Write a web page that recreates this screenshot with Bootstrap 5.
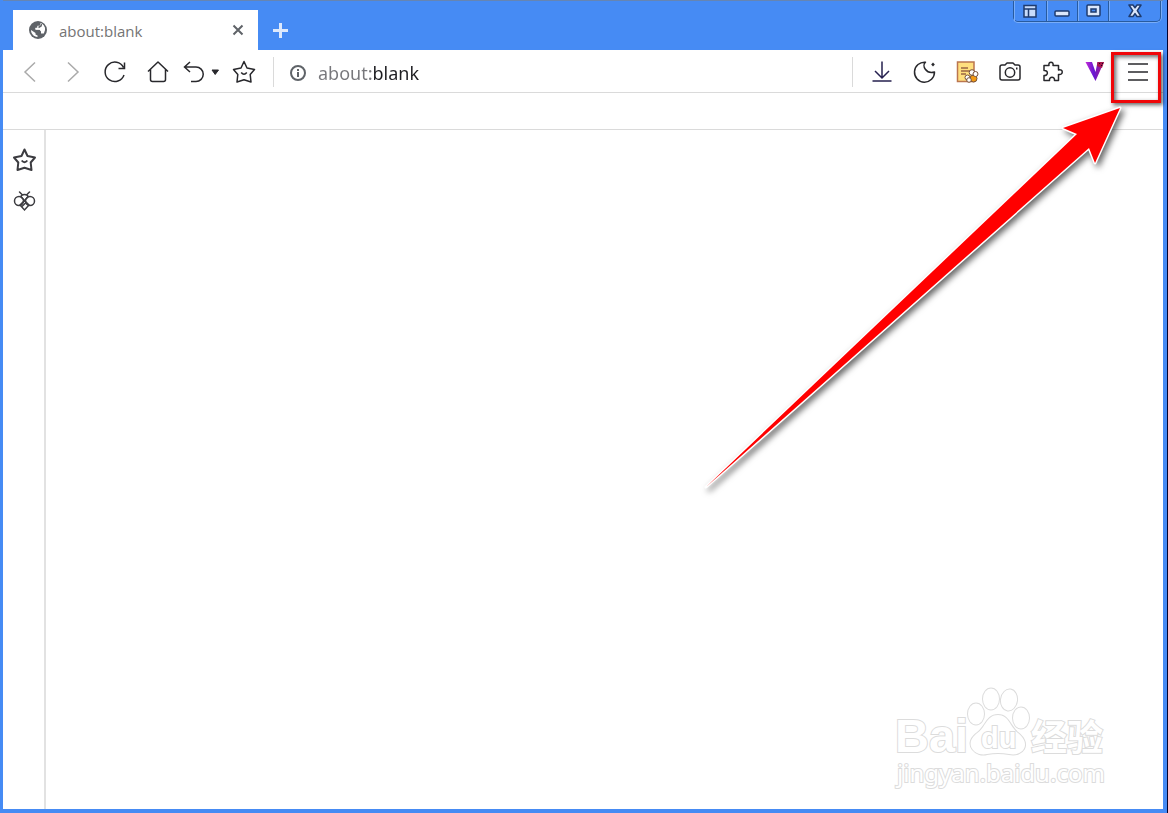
<!DOCTYPE html>
<html lang="zh-CN">
<head>
<meta charset="utf-8">
<meta name="viewport" content="width=device-width, initial-scale=1">
<title>about:blank</title>
<link rel="stylesheet" href="https://cdn.jsdelivr.net/npm/bootstrap@5.3.0/dist/css/bootstrap.min.css">
<style>
:root{--frame:#468bf4;--line:#dadada;--ink:#28282c}
body{font-family:"Noto Sans","Open Sans",sans-serif;background:#03022e;color:var(--ink)}
.window{border:solid var(--frame);border-width:0 4px 4px 3px;margin-right:1px;background:#fff}
svg{display:block;fill:none;stroke:currentColor;stroke-width:1.5;overflow:visible}
.glyph-flat{stroke:none}
.glyph-muted{stroke:#aaa}
.glyph-grey{stroke:#5f6368;stroke-width:2}
.glyph-plus{stroke:#dde9fc;stroke-width:3}
.glyph-violet{stroke:#26204f}
.btn{--bs-btn-padding-x:0;--bs-btn-padding-y:0;border:0;border-radius:0;color:inherit;display:flex;align-items:center;justify-content:center}
.titlebar{background:var(--frame);height:50px;border-top:1px solid #6685b2}
.tab{background:#fff;width:245px;height:40px;margin-left:10px;padding:0 13px 0 16px}
.tab-title{font-family:"Open Sans","Noto Sans",sans-serif;font-size:15px;padding-top:2px;color:#747474}
.controls{height:21px;border:1px solid #285b9f;border-top:0;border-radius:0 0 5px 5px;box-shadow:0 1px #79adf9,1px 0 #79adf9;margin-right:2px;color:#1f3b6e}
.controls .btn{width:31px;border-left:1px solid #285b9f;box-shadow:inset 1px 0 #79adf9}
.controls .btn:first-child{border-left:0;width:32px}
.controls .btn:last-child{width:52px}
.toolbar{height:43px;padding-top:2px;border-bottom:1px solid var(--line)}
.toolbar .btn{height:40px}
.nav-keys .btn{width:43px}
.rule{width:1px;height:30px;background:var(--line)}
.site-info{margin:2px 12px 0 16px}
.address{font-size:18px;border:0;outline:0;padding:2px 0 0;color:transparent;background:linear-gradient(90deg,#77777b 53px,#1e1e22 53px);-webkit-background-clip:text;background-clip:text}
.tools{width:298px;margin-right:4px}
.bookmarks{height:37px;border-bottom:1px solid var(--line)}
.side{width:43px;border-right:2px solid #e2e2e2;padding-top:9px;color:#3c3c40}
.side .btn{height:41px}
.hint-box{top:2px;right:2px;width:50px;height:51px;border:3px solid #f00608;box-shadow:2px 2px 4px #0009,inset 2px 2px 4px #0009;pointer-events:none}
.hint-arrow{top:50px;right:33px;pointer-events:none;filter:drop-shadow(3px 3px 3px #0009)}
.watermark{right:47px;bottom:9px;pointer-events:none;stroke:#dcdcdc;stroke-width:2;paint-order:stroke;font-weight:700}
.watermark .site-line{font-weight:400}
</style>
</head>
<body>
<div class="window d-flex flex-column min-vh-100">
  <header class="titlebar d-flex align-items-end flex-shrink-0">
    <div class="tab d-flex align-items-center">
      <svg class="glyph-flat" width="18" height="18" viewBox="0 0 18 18"><circle cx="9" cy="9" r="9" fill="#5f6368"/><path d="M11.500 2.300L10.800 4.800H8.500V6.800H6.500V8.500H10.500L12 10.500V12.500H14.800C16.800 9 16.200 4.300 11.500 2.300ZM2 9L6.500 12V13.500L8.500 14.500V16C4.800 15.800 2 12.800 2 9Z" fill="#fff"/><path d="M11.800 2.300L11.200 4.300Q11 5.300 10 5.300H8.500V7H6.500V8.800H10.500Q11.500 8.800 11.800 10L14.500 9.500L15.900 9.500L16 7.500C15.500 5 14 3.100 11.800 2.300Z" fill="#fff"/><path d="M12.500 3L12 5L9.500 6.500" stroke="#5f6368" fill="none"/></svg>
      <span class="tab-title flex-grow-1 ms-2 ps-1">about:blank</span>
      <button class="btn" type="button" aria-label="Close tab"><svg class="glyph-grey" width="14" height="14" viewBox="0 0 14 14"><path d="M2.500 2.500L11.500 11.500M11.500 2.500L2.500 11.500"/></svg></button>
    </div>
    <button class="btn ms-3" type="button" aria-label="New tab"><svg class="glyph-plus" width="14" height="40" viewBox="0 0 14 40"><path d="M-1 20.500H14M6.500 13V28"/></svg></button>
    <div class="controls d-flex ms-auto align-self-start">
      <button class="btn" type="button" aria-label="Layout"><svg width="14" height="14" viewBox="0 0 14 14"><path d="M1 1.500H13V13H1Z" fill="#c8dcfb"/><path d="M1 5H13M5.500 5V13" /></svg></button>
      <button class="btn" type="button" aria-label="Minimize"><svg width="16" height="16" viewBox="0 0 16 16"><rect x="1" y="8" width="14" height="5" rx="1" fill="#dbe7fb"/></svg></button>
      <button class="btn" type="button" aria-label="Maximize"><svg width="15" height="14" viewBox="0 0 15 14"><rect x="1" y="1" width="13" height="11" rx="1" fill="#dbe7fb"/><rect x="5" y="5" width="5" height="3" fill="#468bf4"/></svg></button>
      <button class="btn" type="button" aria-label="Close"><svg width="14" height="14" viewBox="0 0 14 14" stroke-linejoin="round"><path d="M1 1H5L7 3.800L9 1H13L9.300 6.700L13 12.500H9L7 9.600L5 12.500H1L4.700 6.700Z" fill="#dbe7fb"/></svg></button>
    </div>
  </header>

  <div class="d-flex flex-column flex-grow-1 position-relative">
    <nav class="toolbar d-flex align-items-center" aria-label="Toolbar">
      <div class="nav-keys d-flex ms-1">
        <button class="btn" type="button" aria-label="Back"><svg class="glyph-muted" width="24" height="24" viewBox="0 0 24 24"><path d="M18 2.500L8 12L18 21.500"/></svg></button>
        <button class="btn" type="button" aria-label="Forward"><svg class="glyph-muted" width="24" height="24" viewBox="0 0 24 24"><path d="M8 2.500L18 12L8 21.500"/></svg></button>
        <button class="btn" type="button" aria-label="Reload"><svg width="24" height="24" viewBox="0 0 24 24"><path d="M20.500 7.500A9.700 9.700 0 1 0 21 15M21.500 2.500V8.500H15.500"/></svg></button>
        <button class="btn" type="button" aria-label="Home"><svg width="24" height="24" viewBox="0 0 24 24" stroke-linejoin="round"><path d="M2 11.500L12 2L22 11.500M4.500 9.500V19.500Q4.500 21.500 6.500 21.500H17.500Q19.500 21.500 19.500 19.500V9.500"/></svg></button>
        <button class="btn" type="button" aria-label="Undo"><svg width="36" height="24" viewBox="0 0 36 24"><path d="M7 2L1.500 7L7 12M1.500 7H13A7.200 7.200 0 0 1 13 21.500H8"/><path d="M29 10H35.500L32.200 14.500Z" fill="currentColor" stroke-width="1"/></svg></button>
        <button class="btn" type="button" aria-label="Favourites"><svg width="24" height="24" viewBox="0 0 24 24" stroke-linejoin="round"><path d="M12 1.500L15 8L22.500 9.500L18.200 14.500L19 22L12 19.800L5 22L5.800 14.500L1.500 9.500L9 8Z"/><path d="M9.200 12.500Q12 16 14.800 12.500"/></svg></button>
      </div>
      <span class="rule ms-2"></span>
      <label class="site-info" for="address" title="Address"><svg class="glyph-grey" width="16" height="16" viewBox="0 0 16 16"><circle cx="8" cy="8" r="7"/><path d="M8 7V12M8 4V6"/></svg></label>
      <input class="address flex-grow-1" id="address" type="text" value="about:blank" spellcheck="false">
      <span class="rule me-2"></span>
      <div class="tools d-flex">
        <button class="btn flex-fill" type="button" aria-label="Downloads"><svg class="glyph-violet" width="24" height="24" viewBox="0 0 24 24"><path d="M12 1.500V17M5 11L12 18L19 11M2.500 21H21.500"/></svg></button>
        <button class="btn flex-fill" type="button" aria-label="Night mode"><svg width="24" height="24" viewBox="0 0 24 24" stroke-linejoin="round"><path d="M12.500 2.200C8.500 5.500 13 14.500 21.500 12A10 10 0 1 1 12.500 2.200Z"/><path d="M20 2.500L21.800 4.500L20 6.500L18.200 4.500Z" fill="currentColor" stroke="none"/></svg></button>
        <button class="btn flex-fill" type="button" aria-label="Notes"><svg width="24" height="24" viewBox="0 0 24 24"><path d="M2.500 2H19V21.500H2.500Z" fill="#ffdf7e" stroke="#bb764f"/><path d="M6 8H13M6 11H15M6 14H11" stroke="#9b6544"/><g stroke="#76513a" stroke-width="1"><circle cx="18.500" cy="18.500" r="3.500" fill="#f39a13"/><circle cx="17" cy="12.500" r="2.800" fill="#fff"/><circle cx="20.500" cy="14" r="2.500" fill="#fff"/><circle cx="12.500" cy="17.500" r="2.500" fill="#fff"/><circle cx="14" cy="20" r="2.300" fill="#fff"/></g></svg></button>
        <button class="btn flex-fill" type="button" aria-label="Screenshot"><svg width="24" height="24" viewBox="0 0 24 24" stroke-linejoin="round"><path d="M4 5H7L9 3H15L17 5H20Q22 5 22 7V18Q22 20 20 20H4Q2 20 2 18V7Q2 5 4 5Z"/><circle cx="12" cy="12.500" r="4.700"/><path d="M18 8.500H19.500" stroke-width="2"/></svg></button>
        <button class="btn flex-fill" type="button" aria-label="Extensions"><svg width="24" height="24" viewBox="0 0 24 24" stroke-linejoin="round"><path d="M3 5.500H8C6.800 1 13.200 1 12 5.500H17.500V10C22.500 8.500 22.500 15.500 17.500 14.500V20.500H13.500C14 16 8 16 8.500 20.500H3V15.500C7.500 16 7.500 10 3 10.500Z"/></svg></button>
        <button class="btn flex-fill" type="button" aria-label="Video tools"><svg class="glyph-flat" width="24" height="24" viewBox="0 0 24 24"><defs><linearGradient id="vee"><stop stop-color="#c52bd6"/><stop offset=".45" stop-color="#6518d2"/><stop offset="1" stop-color="#b21b85"/></linearGradient></defs><path d="M2.500 2H9L12.500 12L14.500 2H21L12.500 21Z" fill="url(#vee)"/><path d="M14.500 2H21L19 8L14 6Z" fill="#a8164c"/><path d="M16 3H17V4H16ZM18 5H19V6H18ZM19 3H20V4H19Z" fill="#180622"/></svg></button>
        <button class="btn flex-fill" type="button" aria-label="Menu"><svg width="24" height="24" viewBox="0 0 24 24"><path d="M2 4H22M2 12H22M2 20H22"/></svg></button>
      </div>
    </nav>
    <div class="bookmarks"></div>
    <div class="d-flex flex-grow-1">
      <aside class="side d-flex flex-column" aria-label="Sidebar">
        <button class="btn" type="button" aria-label="Saved pages"><svg width="24" height="24" viewBox="0 0 24 24" stroke-linejoin="round"><g stroke-width="2"><path d="M12.500 1.500L15.500 8L23 9.500L18.700 14.500L19.500 22L12.500 19.800L5.500 22L6.300 14.500L2 9.500L9.500 8Z"/><path d="M9.700 12.500Q12.500 16 15.300 12.500"/></g></svg></button>
        <button class="btn" type="button" aria-label="Assistant"><svg width="22" height="22" viewBox="0 0 22 22" stroke-linecap="round"><circle cx="6" cy="11" r="4.500"/><circle cx="17" cy="11" r="4.500"/><path d="M6.500 2L9 4.500M16.500 2L14 4.500M8 7Q8 4.500 11.500 4.500T15 7M8 7L11.500 10.500L15 7M11.500 10.500L7 15L11.500 20L16 15ZM9 16.500L12.500 13"/></svg></button>
      </aside>
      <main class="flex-grow-1"></main>
    </div>

    <div class="hint-box position-absolute"></div>
    <svg class="hint-arrow position-absolute" width="430" height="400" viewBox="700 100 430 400" aria-hidden="true"><path d="M706 487L1077 134L1063 128L1120 108L1095 163L1089 148Z" fill="#f00" stroke="#fff" stroke-width="3" stroke-linejoin="round" paint-order="stroke"/></svg>
    <svg class="watermark position-absolute" width="224" height="115" viewBox="0 0 224 115" aria-label="Baidu 经验">
      <g fill="#fff">
        <text x="3" y="67" font-family="Liberation Sans, sans-serif" font-size="47">Bai</text>
        <ellipse cx="84" cy="29" rx="8" ry="10.500"/><ellipse cx="99" cy="14" rx="8" ry="10.500"/><ellipse cx="117" cy="15" rx="8" ry="10.500" transform="rotate(8 117 15)"/><ellipse cx="129" cy="33" rx="8" ry="10.500"/>
        <path d="M106 30C94 30 94 43 84 49C71 60 84 72 95 69Q106 67 117 69C131 72 140 59 126 48C118 42 117 30 106 30Z"/>
        <text x="89" y="63" font-family="Liberation Sans, sans-serif" font-size="29">du</text>
        <text x="139" y="66" font-family="Noto Sans CJK SC, sans-serif" font-size="36">经验</text>
        <text class="site-line" x="5" y="97" font-family="Noto Sans, sans-serif" font-size="24">jingyan.baidu.com</text>
      </g>
    </svg>
  </div>
</div>
<script src="https://cdn.jsdelivr.net/npm/bootstrap@5.3.0/dist/js/bootstrap.bundle.min.js"></script>
</body>
</html>
